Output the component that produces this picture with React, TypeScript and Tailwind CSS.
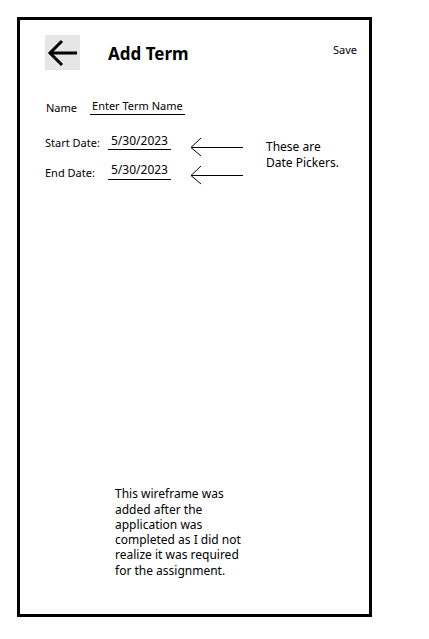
export default function App() {
  const font = { fontFamily: '"Noto Sans", "Open Sans", sans-serif' };
  return (
    <div className="w-[429px] h-[639px] bg-white pt-[17px] pl-[17px]" style={font}>
      <div className="w-[355px] h-[600px] border-[3px] border-black flex flex-col text-black">
        <div className="flex items-start mt-[15px] ml-[25px] mr-[12px]">
          <button className="w-[35px] h-[35px] bg-[#e6e6e6] flex items-center justify-center">
            <svg width="35" height="35" viewBox="0 0 35 35" fill="none" stroke="black" strokeWidth="3">
              <path d="M5 18H32" />
              <path d="M17 6L5 18L17 30" />
            </svg>
          </button>
          <h1 className="ml-[28px] mt-[9px] text-[17px] font-bold leading-[20px]">Add Term</h1>
          <span className="ml-auto mt-[8px] text-[11px] leading-[14px]">Save</span>
        </div>

        <div className="flex items-end mt-[28px] ml-[26px] text-[11px] leading-[15px]">
          <span>Name</span>
          <span className="ml-[13px] px-[2px] border-b border-black pb-[1px]">Enter Term Name</span>
        </div>

        <div className="flex mt-[18px] ml-[25px]">
          <div className="flex flex-col gap-[12px] text-[11px] leading-[15px]">
            <div className="flex items-end">
              <span className="w-[63px]">Start Date:</span>
              <span className="border-b border-black px-[3px] pb-[1px] text-[12px]">5/30/2023</span>
            </div>
            <div className="flex items-end">
              <span className="w-[63px]">End Date:</span>
              <span className="border-b border-black px-[3px] pb-[2px] text-[12px]">5/30/2023</span>
            </div>
          </div>
          <svg width="56" height="50" viewBox="0 0 56 50" className="ml-[18px] mt-[4px]" fill="none" stroke="black" strokeWidth="1">
            <path d="M2 10.5H54" />
            <path d="M12 1L2 10.5L12 19" />
            <path d="M2 38.5H54" />
            <path d="M12 29L2 38.5L12 47" />
          </svg>
          <p className="ml-[21px] mt-[6px] text-[12px] leading-[16px]">
            These are
            <br />
            Date Pickers.
          </p>
        </div>

        <p className="mt-auto mb-[36px] ml-[95px] w-[130px] text-[12px] leading-[15.3px]">
          This wireframe was added after the application was completed as I did not realize it was required for the assignment.
        </p>
      </div>
    </div>
  );
}
